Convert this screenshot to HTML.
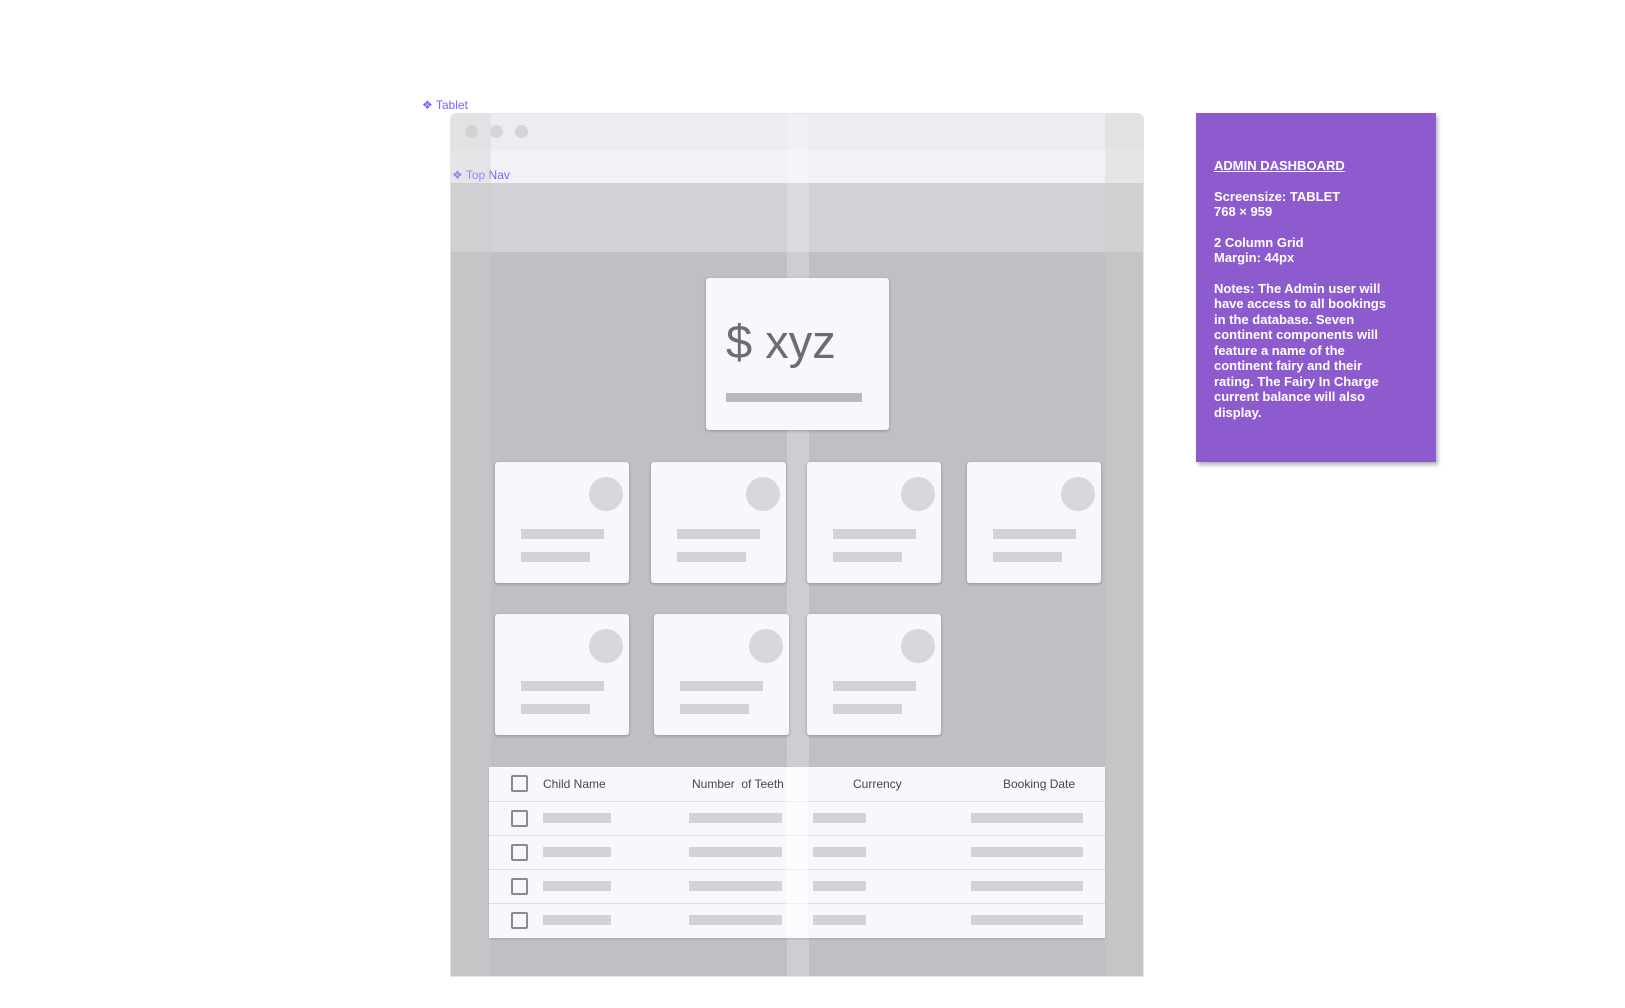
<!DOCTYPE html>
<html><head><meta charset="utf-8"><style>
*{margin:0;padding:0;box-sizing:border-box}
body{width:1625px;height:1008px;background:#fff;position:relative;overflow:hidden;font-family:"Liberation Sans",sans-serif}
.a{position:absolute}
.lbl{color:#7b61ff;font-size:12px}
.card{position:absolute;background:#f7f8fc;border-radius:3px;box-shadow:0 1px 3px rgba(0,0,0,.25)}
.circ{position:absolute;width:34px;height:34px;border-radius:50%;background:#d7d8dc}
.bar{position:absolute;height:10px;background:#d2d3d7}
.row{position:absolute;left:0;width:616px;height:34px;border-top:1px solid #dcdde1}
.cb{position:absolute;left:22px;top:8px;width:17px;height:17px;border:2px solid #8a8a8e;border-radius:2px}
.th{position:absolute;top:10px;font-size:12px;color:#46474b}
</style></head><body>
<div class="a lbl" style="left:422px;top:98px">&#10070; Tablet</div>
<div class="a" style="left:450px;top:113px;width:694px;height:864px;border-radius:6px 6px 0 0;overflow:hidden;border:1px solid #e4e4e8">
 <div class="a" style="left:0;top:0;width:694px;height:36px;background:#ededf1"></div>
 <div class="a" style="left:14px;top:11px;width:13px;height:13px;border-radius:50%;background:#d4d5d9"></div>
 <div class="a" style="left:39px;top:11px;width:13px;height:13px;border-radius:50%;background:#d4d5d9"></div>
 <div class="a" style="left:64px;top:11px;width:13px;height:13px;border-radius:50%;background:#d4d5d9"></div>
 <div class="a" style="left:0;top:36px;width:694px;height:33px;background:#f2f2f6"></div>
 <div class="a lbl" style="left:1px;top:54px">&#10070; Top Nav</div>
 <div class="a" style="left:0;top:69px;width:694px;height:69px;background:#d1d2d6"></div>
 <div class="a" style="left:0;top:138px;width:694px;height:730px;background:#bfc0c4"></div>
 <div class="a" style="left:0;top:0;width:40px;height:868px;background:rgba(205,205,205,.35)"></div>
 <div class="a" style="left:654px;top:0;width:40px;height:868px;background:rgba(205,205,205,.35)"></div>
 <div class="a" style="left:336px;top:0;width:22px;height:868px;background:rgba(255,255,255,.22)"></div>
</div>
<div class="card" style="left:706px;top:278px;width:183px;height:152px">
 <div class="a" style="left:20px;top:36px;font-size:47px;color:#6c6d72">$ xyz</div>
 <div class="a" style="left:20px;top:115px;width:136px;height:9px;background:#b8b9bd"></div>
</div>
<div class="card" style="left:495px;top:462px;width:134px;height:121px"><div class="circ" style="right:6px;top:15px"></div><div class="bar" style="left:26px;top:67px;width:83px"></div><div class="bar" style="left:26px;top:90px;width:69px"></div></div>
<div class="card" style="left:651px;top:462px;width:135px;height:121px"><div class="circ" style="right:6px;top:15px"></div><div class="bar" style="left:26px;top:67px;width:83px"></div><div class="bar" style="left:26px;top:90px;width:69px"></div></div>
<div class="card" style="left:807px;top:462px;width:134px;height:121px"><div class="circ" style="right:6px;top:15px"></div><div class="bar" style="left:26px;top:67px;width:83px"></div><div class="bar" style="left:26px;top:90px;width:69px"></div></div>
<div class="card" style="left:967px;top:462px;width:134px;height:121px"><div class="circ" style="right:6px;top:15px"></div><div class="bar" style="left:26px;top:67px;width:83px"></div><div class="bar" style="left:26px;top:90px;width:69px"></div></div>
<div class="card" style="left:495px;top:614px;width:134px;height:121px"><div class="circ" style="right:6px;top:15px"></div><div class="bar" style="left:26px;top:67px;width:83px"></div><div class="bar" style="left:26px;top:90px;width:69px"></div></div>
<div class="card" style="left:654px;top:614px;width:135px;height:121px"><div class="circ" style="right:6px;top:15px"></div><div class="bar" style="left:26px;top:67px;width:83px"></div><div class="bar" style="left:26px;top:90px;width:69px"></div></div>
<div class="card" style="left:807px;top:614px;width:134px;height:121px"><div class="circ" style="right:6px;top:15px"></div><div class="bar" style="left:26px;top:67px;width:83px"></div><div class="bar" style="left:26px;top:90px;width:69px"></div></div>
<div class="a" style="left:489px;top:767px;width:616px;height:171px;background:#f7f8fc;box-shadow:0 1px 2px rgba(0,0,0,.15)">
 <div class="row" style="top:0;border-top:none"><div class="cb"></div><div class="th" style="left:54px">Child Name</div><div class="th" style="left:203px">Number&nbsp; of Teeth</div><div class="th" style="left:364px">Currency</div><div class="th" style="left:514px">Booking Date</div></div>
 <div class="row" style="top:34px"><div class="cb"></div><div class="bar" style="left:54px;top:11px;width:68px"></div><div class="bar" style="left:200px;top:11px;width:93px"></div><div class="bar" style="left:324px;top:11px;width:53px"></div><div class="bar" style="left:482px;top:11px;width:112px"></div></div>
 <div class="row" style="top:68px"><div class="cb"></div><div class="bar" style="left:54px;top:11px;width:68px"></div><div class="bar" style="left:200px;top:11px;width:93px"></div><div class="bar" style="left:324px;top:11px;width:53px"></div><div class="bar" style="left:482px;top:11px;width:112px"></div></div>
 <div class="row" style="top:102px"><div class="cb"></div><div class="bar" style="left:54px;top:11px;width:68px"></div><div class="bar" style="left:200px;top:11px;width:93px"></div><div class="bar" style="left:324px;top:11px;width:53px"></div><div class="bar" style="left:482px;top:11px;width:112px"></div></div>
 <div class="row" style="top:136px"><div class="cb"></div><div class="bar" style="left:54px;top:11px;width:68px"></div><div class="bar" style="left:200px;top:11px;width:93px"></div><div class="bar" style="left:324px;top:11px;width:53px"></div><div class="bar" style="left:482px;top:11px;width:112px"></div></div>
 <div class="a" style="left:297px;top:0;width:22px;height:171px;background:rgba(255,255,255,.55)"></div>
</div>
<div class="a" style="left:1196px;top:113px;width:240px;height:349px;background:#8e5bcf;box-shadow:2px 3px 4px rgba(0,0,0,.3);color:#fff;font-weight:bold;font-size:13px;line-height:15.5px;padding:45px 40px 0 18px">
 <div style="text-decoration:underline;margin-bottom:15px">ADMIN DASHBOARD</div>
 <div style="margin-bottom:15px">Screensize: TABLET<br>768 × 959</div>
 <div style="margin-bottom:15px">2 Column Grid<br>Margin: 44px</div>
 <div>Notes: The Admin user will have access to all bookings in the database. Seven continent components will feature a name of the continent fairy and their rating. The Fairy In Charge current balance will also display.</div>
</div>
</body></html>
